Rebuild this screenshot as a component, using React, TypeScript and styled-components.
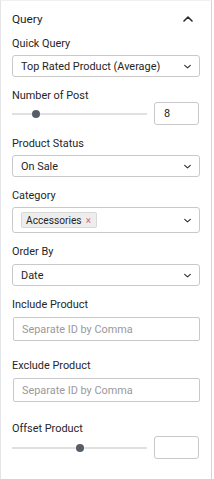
import React from "react";
import styled, { createGlobalStyle } from "styled-components";

const Global = createGlobalStyle`
  html, body { margin: 0; padding: 0; background: #fff; }
  body { font-family: Roboto, "Noto Sans", sans-serif; color: #1e1e1e; }
  * { box-sizing: border-box; }
`;

const Panel = styled.div`
  width: 212px;
  height: 479px;
  border-left: 1px solid #e2e4e7;
  border-right: 1px solid #d5d5d5;
  border-top: 1px solid #f0f0f0;
  padding: 0 11px 0 11px;
  display: flex;
  flex-direction: column;
`;

const Header = styled.div`
  display: flex;
  align-items: center;
  justify-content: space-between;
  height: 36px;
  font-size: 11.8px;
  color: #1e1e1e;
`;

const Field = styled.div<{ $mb: number }>`
  display: flex;
  flex-direction: column;
  margin-bottom: ${(p) => p.$mb}px;
`;

const Label = styled.div<{ $gap: number }>`
  font-size: 10.9px;
  line-height: 14px;
  color: #262626;
  margin-bottom: ${(p) => p.$gap}px;
`;

const SelectBox = styled.div<{ $h: number }>`
  height: ${(p) => p.$h}px;
  border: 1px solid #c9c9c9;
  border-radius: 3px;
  display: flex;
  align-items: center;
  justify-content: space-between;
  padding: 0 8px 0 8px;
  font-size: 10.9px;
  color: #262626;
`;

const TextInput = styled.div`
  height: 24px;
  border: 1px solid #c9c9c9;
  border-radius: 2px;
  display: flex;
  align-items: center;
  padding: 0 8px;
  font-size: 10.9px;
  color: #9a9a9a;
  margin-left: 1px;
`;

const Tag = styled.span`
  display: inline-flex;
  align-items: center;
  gap: 4px;
  height: 16px;
  padding: 0 5px 0 4px;
  background: #ededed;
  border: 1px solid #d8d8d8;
  border-radius: 2px;
  font-size: 10.2px;
  color: #262626;
`;

const TagX = styled.span`
  color: #d46a6a;
  font-size: 10px;
`;

const SliderRow = styled.div`
  display: flex;
  align-items: center;
  justify-content: space-between;
`;

const Track = styled.div`
  position: relative;
  width: 135px;
  height: 2px;
  background: #e0e0e0;
`;

const Thumb = styled.span`
  position: absolute;
  top: -3px;
  width: 8px;
  height: 8px;
  border-radius: 50%;
  background: #555d66;
`;

const NumberBox = styled.div`
  width: 45px;
  height: 23px;
  border: 1px solid #c9c9c9;
  border-radius: 3px;
  display: flex;
  align-items: center;
  padding: 0 9px;
  font-size: 10.9px;
  color: #262626;
  margin-right: 1px;
`;

const Chevron = ({ up, size = 7, stroke = 1.1 }: { up?: boolean; size?: number; stroke?: number }) => (
  <svg width={size} height={size} viewBox="0 0 10 10" fill="none">
    <path
      d={up ? "M1 7 L5 3 L9 7" : "M1 3.5 L5 7 L9 3.5"}
      stroke="#2a2a2a"
      strokeWidth={stroke * (10 / size)}
      strokeLinecap="round"
      strokeLinejoin="round"
    />
  </svg>
);

const Select = ({ value, h = 22 }: { value: React.ReactNode; h?: number }) => (
  <SelectBox $h={h}>
    <span>{value}</span>
    <Chevron />
  </SelectBox>
);

const Slider = ({ pos, value }: { pos: number; value: string }) => (
  <SliderRow>
    <Track>
      <Thumb style={{ left: pos - 4 }} />
    </Track>
    <NumberBox>{value}</NumberBox>
  </SliderRow>
);

export default function App() {
  return (
    <>
      <Global />
      <Panel>
        <Header>
          <span>Query</span>
          <span style={{ marginRight: 7, display: "flex" }}>
            <Chevron up size={10} stroke={1.6} />
          </span>
        </Header>
        <Field $mb={12}>
          <Label $gap={4}>Quick Query</Label>
          <Select value="Top Rated Product (Average)" />
        </Field>
        <Field $mb={12}>
          <Label $gap={-1}>Number of Post</Label>
          <Slider pos={24} value="8" />
        </Field>
        <Field $mb={12}>
          <Label $gap={4}>Product Status</Label>
          <Select value="On Sale" />
        </Field>
        <Field $mb={12}>
          <Label $gap={4}>Category</Label>
          <Select
            h={26}
            value={
              <Tag>
                Accessories<TagX>×</TagX>
              </Tag>
            }
          />
        </Field>
        <Field $mb={12}>
          <Label $gap={5}>Order By</Label>
          <Select value="Date" />
        </Field>
        <Field $mb={18}>
          <Label $gap={5}>Include Product</Label>
          <TextInput>Separate ID by Comma</TextInput>
        </Field>
        <Field $mb={20}>
          <Label $gap={5}>Exclude Product</Label>
          <TextInput>Separate ID by Comma</TextInput>
        </Field>
        <Field $mb={0}>
          <Label $gap={0}>Offset Product</Label>
          <Slider pos={68} value="" />
        </Field>
      </Panel>
    </>
  );
}
